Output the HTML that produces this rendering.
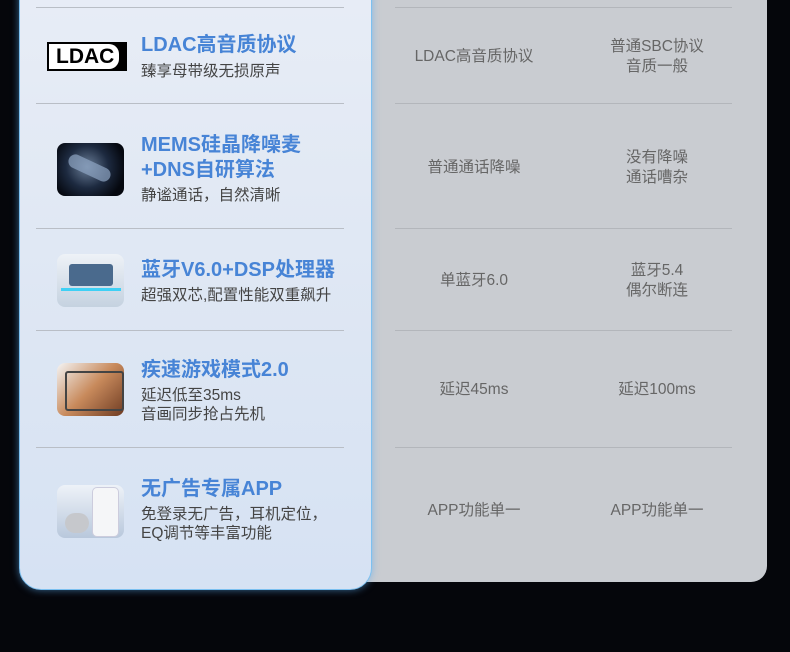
<!DOCTYPE html>
<html><head><meta charset="utf-8"><style>
*{margin:0;padding:0;box-sizing:border-box}
body{width:790px;height:652px;background:#05060b;position:relative;overflow:hidden;font-family:"Liberation Sans","Noto Sans CJK SC",sans-serif}
.right{position:absolute;left:340px;top:-20px;width:427px;height:602px;background:#c9ccd1;border-radius:0 0 16px 16px}
.left{position:absolute;left:19px;top:-30px;width:353px;height:620px;background:linear-gradient(180deg,#e8edf6,#dde6f3 60%,#d6e2f3);border:1.5px solid #7cc0f0;border-radius:0 0 22px 22px;box-shadow:0 0 8px rgba(90,170,240,.6)}
.hl{position:absolute;height:1px;background:#b9bec6}
.rl{position:absolute;height:1px;background:#b3b6bb}
.t{position:absolute;left:141px;color:#4784d6;font-size:20px;font-weight:bold;white-space:nowrap;line-height:24px}
.s{position:absolute;left:141px;color:#444;font-size:15.5px;line-height:20px;white-space:nowrap}
.c{position:absolute;width:180px;text-align:center;color:#666;font-size:15.5px;line-height:20px}
.img{position:absolute;left:57px;width:67px;border-radius:8px;overflow:hidden}
</style></head><body>
<div class="right"></div>
<div class="rl" style="left:395px;top:7px;width:337px"></div>
<div class="rl" style="left:395px;top:103px;width:337px"></div>
<div class="rl" style="left:395px;top:228px;width:337px"></div>
<div class="rl" style="left:395px;top:330px;width:337px"></div>
<div class="rl" style="left:395px;top:447px;width:337px"></div>
<div class="left"></div>
<div class="hl" style="left:36px;top:7px;width:308px"></div>
<div class="hl" style="left:36px;top:103px;width:308px"></div>
<div class="hl" style="left:36px;top:228px;width:308px"></div>
<div class="hl" style="left:36px;top:330px;width:308px"></div>
<div class="hl" style="left:36px;top:447px;width:308px"></div>

<div style="position:absolute;left:47px;top:42px;width:80px;height:29px;background:#000;padding:2px"><div style="width:70px;height:25px;background:#fff;color:#000;font-weight:bold;font-size:21px;line-height:25px;padding-left:7px;border-radius:0 10px 10px 0">LDAC</div></div>
<div class="t" style="top:33px">LDAC高音质协议</div>
<div class="s" style="top:62px">臻享母带级无损原声</div>

<div class="img" style="top:143px;height:53px;background:radial-gradient(circle at 45% 45%,#6b7f99,#1d2a40 45%,#05080f 80%)"><div style="position:absolute;left:10px;top:18px;width:45px;height:14px;border-radius:7px;background:#8fa5c3;transform:rotate(25deg);opacity:.7"></div></div>
<div class="t" style="top:133px">MEMS硅晶降噪麦</div>
<div class="t" style="top:158px">+DNS自研算法</div>
<div class="s" style="top:186px">静谧通话，自然清晰</div>

<div class="img" style="top:254px;height:53px;background:linear-gradient(180deg,#eef2f7,#c5d2e0)"><div style="position:absolute;left:12px;top:10px;width:44px;height:22px;background:#4a6a8d;border-radius:3px"></div><div style="position:absolute;left:4px;top:34px;width:60px;height:3px;background:#3fd0f5"></div></div>
<div class="t" style="top:258px">蓝牙V6.0+DSP处理器</div>
<div class="s" style="top:286px">超强双芯,配置性能双重飙升</div>

<div class="img" style="top:363px;height:53px;background:linear-gradient(135deg,#f4f4f4,#c88a5c 50%,#6e3b22)"><div style="position:absolute;left:8px;top:8px;width:59px;height:40px;border:2px solid #444;border-radius:3px"></div></div>
<div class="t" style="top:358px">疾速游戏模式2.0</div>
<div class="s" style="top:386px">延迟低至35ms</div>
<div class="s" style="top:405px">音画同步抢占先机</div>

<div class="img" style="top:485px;height:53px;background:linear-gradient(180deg,#eef2f8,#b9c8dc)"><div style="position:absolute;left:35px;top:2px;width:27px;height:50px;background:#f5f6f8;border-radius:5px;border:1px solid #ccd"></div><div style="position:absolute;left:8px;top:28px;width:24px;height:20px;background:#c6c8cc;border-radius:10px"></div></div>
<div class="t" style="top:477px">无广告专属APP</div>
<div class="s" style="top:505px">免登录无广告，耳机定位，</div>
<div class="s" style="top:524px">EQ调节等丰富功能</div>

<div class="c" style="left:384px;top:47px">LDAC高音质协议</div>
<div class="c" style="left:567px;top:37px">普通SBC协议<br>音质一般</div>
<div class="c" style="left:384px;top:158px">普通通话降噪</div>
<div class="c" style="left:567px;top:148px">没有降噪<br>通话嘈杂</div>
<div class="c" style="left:384px;top:271px">单蓝牙6.0</div>
<div class="c" style="left:567px;top:261px">蓝牙5.4<br>偶尔断连</div>
<div class="c" style="left:384px;top:380px">延迟45ms</div>
<div class="c" style="left:567px;top:380px">延迟100ms</div>
<div class="c" style="left:384px;top:501px">APP功能单一</div>
<div class="c" style="left:567px;top:501px">APP功能单一</div>
</body></html>
